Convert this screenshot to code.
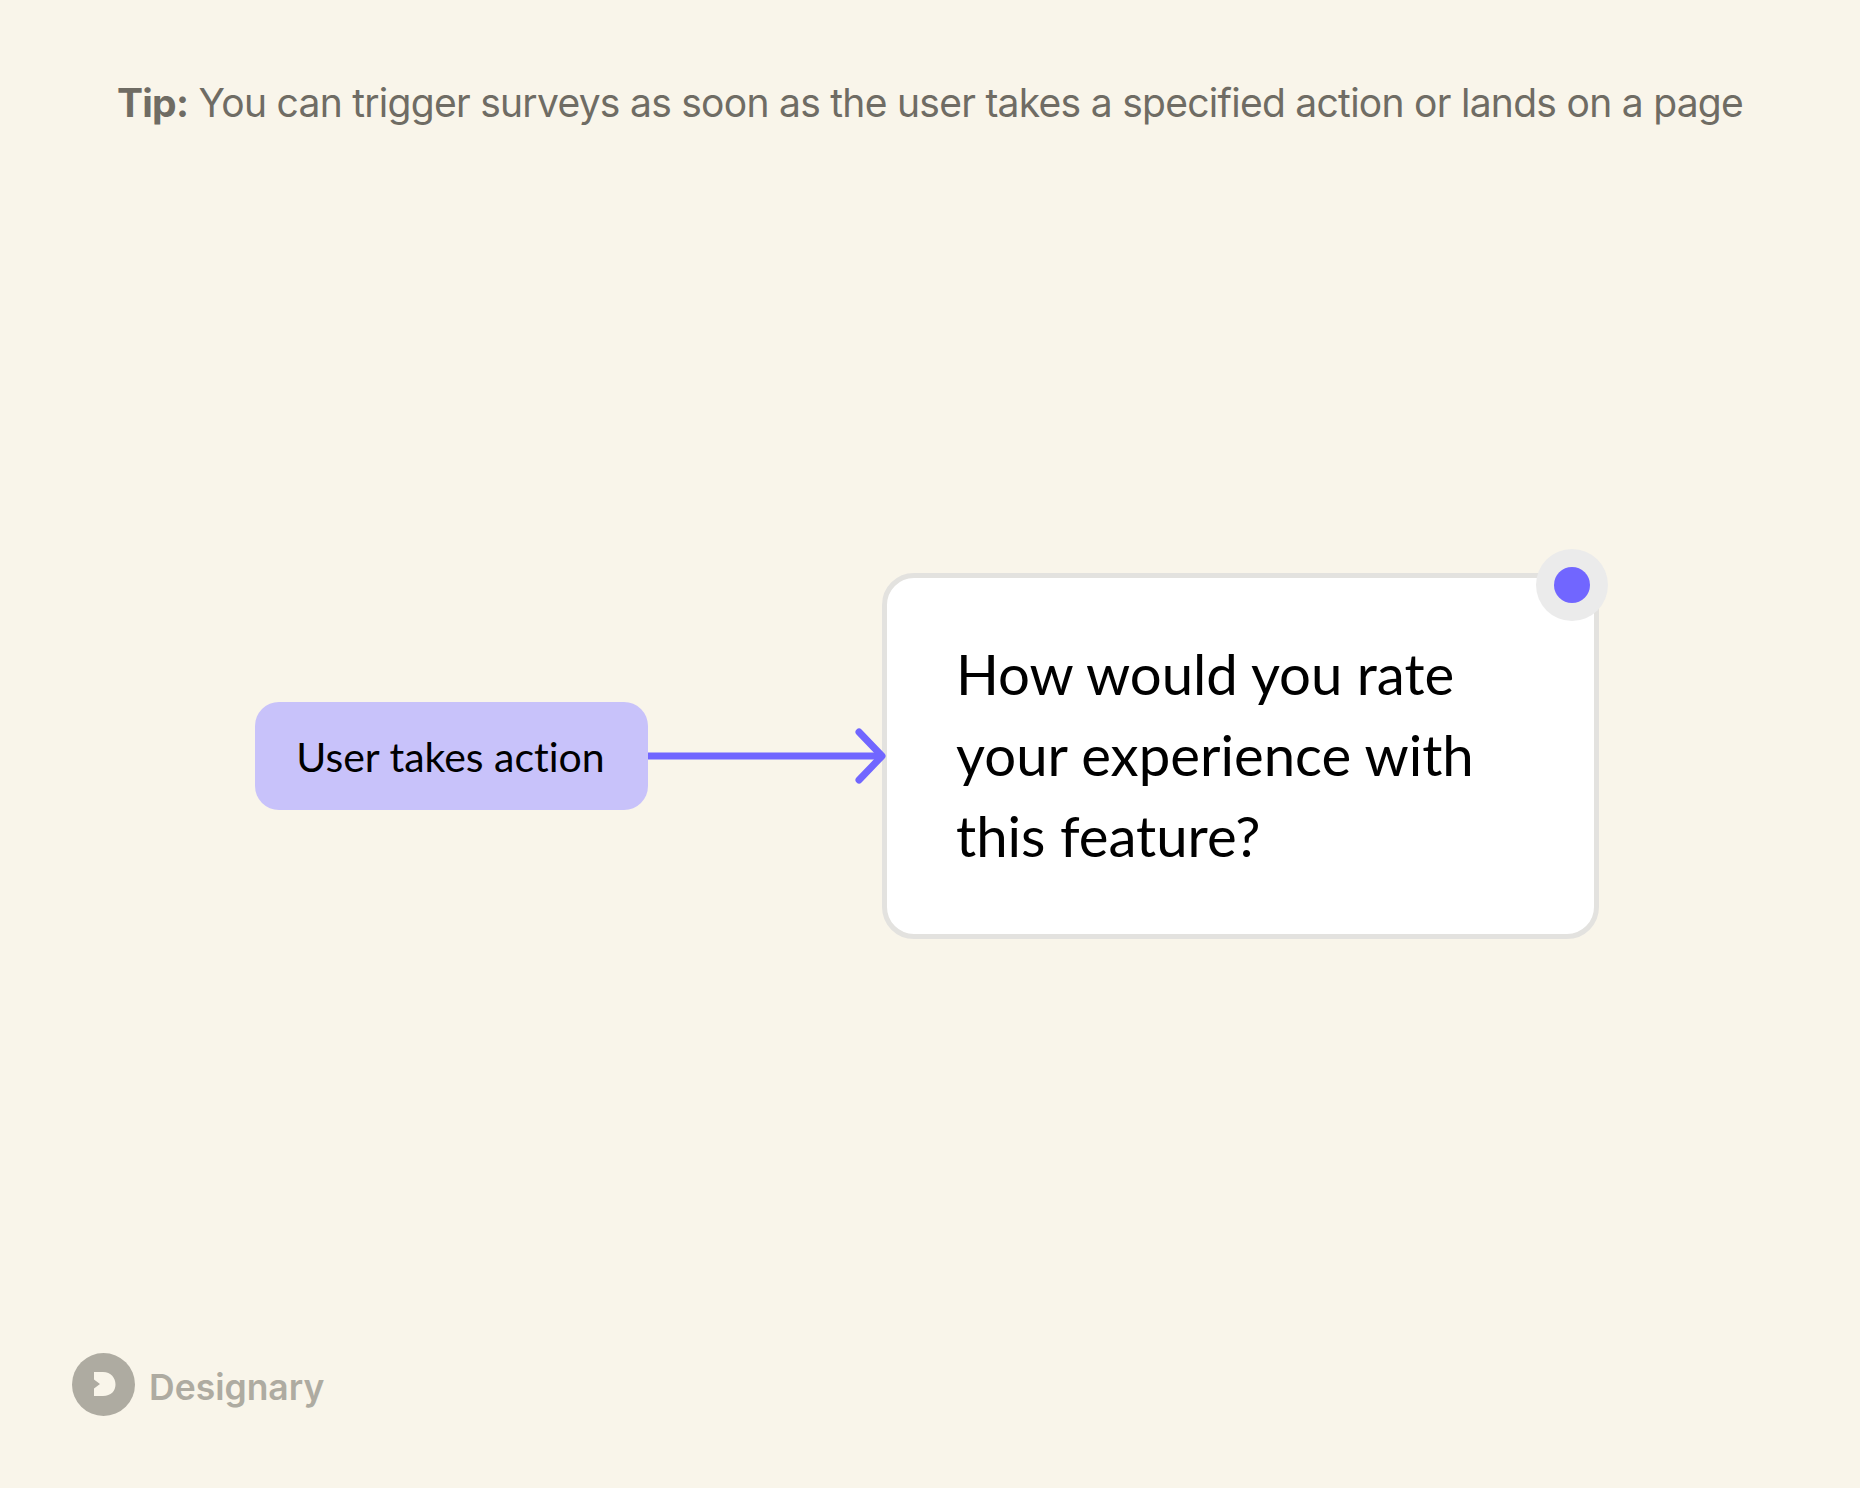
<div class="page">
  <p class="tip"><strong>Tip:</strong> You can trigger surveys as soon as the user takes a specified action or lands on a page</p>
  <div class="flow">
    <div class="trigger">User takes action</div>
    <svg class="arrow" width="239" height="70" viewBox="0 0 239 70" aria-hidden="true">
      <path d="M0 35H234" fill="none" stroke="#7166ff" stroke-width="7" />
      <path d="M211 11L234 35L211 59" fill="none" stroke="#7166ff" stroke-width="7" stroke-linecap="round" stroke-linejoin="round" />
    </svg>
    <div class="card">
      <p class="question">How would you rate your experience with this feature?</p>
      <span class="badge"><span class="dot"></span></span>
    </div>
  </div>
  <div class="brand">
    <svg width="63" height="63" viewBox="0 0 63 63" aria-hidden="true">
      <circle cx="31.5" cy="31.5" r="31.5" fill="#aeaba1" />
      <path d="M22 19H31C39 19 43.500 25 43.500 31.500C43.500 38 39 43 31 43H22V35.500L28 31L22 26.500Z" fill="#f9f5ea" />
    </svg>
    <span class="name">Designary</span>
  </div>
</div>

<style>
  :global(body) {
    margin: 0;
    background: #f9f5ea;
  }
  .page {
    box-sizing: border-box;
    width: 1860px;
    height: 1488px;
    display: flex;
    flex-direction: column;
    background: #f9f5ea;
  }
  .tip {
    margin: 75px 0 0;
    text-align: center;
    font: 400 39px/56px Inter, sans-serif;
    letter-spacing: -0.72px;
    color: #6f6c64;
    white-space: nowrap;
  }
  .tip strong {
    font-weight: 700;
  }
  .flow {
    display: flex;
    align-items: center;
    margin: 442px 0 0 255px;
    height: 366px;
  }
  .trigger {
    box-sizing: border-box;
    width: 393px;
    height: 108px;
    padding-right: 2px;
    border-radius: 24px;
    background: #c8c2fa;
    color: #000;
    display: flex;
    align-items: center;
    justify-content: center;
    font: 400 41px/1 Lato, sans-serif;
    font-variant-ligatures: none;
  }
  .arrow {
    flex: none;
    margin-right: -5px;
    position: relative;
    z-index: 1;
  }
  .card {
    position: relative;
    box-sizing: border-box;
    width: 717px;
    height: 366px;
    padding: 55px 60px 0 69px;
    background: #fff;
    border: 5px solid #e3e2df;
    border-radius: 32px;
  }
  .question {
    margin: 0;
    font: 400 56.300px/81px Lato, sans-serif;
    color: #000;
    font-variant-ligatures: none;
  }
  .badge {
    position: absolute;
    top: -29px;
    right: -14px;
    width: 72px;
    height: 72px;
    border-radius: 50%;
    background: #ebebeb;
    display: flex;
    align-items: center;
    justify-content: center;
  }
  .dot {
    width: 36px;
    height: 36px;
    border-radius: 50%;
    background: #7166ff;
  }
  .brand {
    display: flex;
    align-items: center;
    gap: 14px;
    margin: 414px 0 0 72px;
  }
  .name {
    font: 600 35.500px/1 Inter, sans-serif;
    color: #aeaba1;
    padding-top: 7px;
  }
</style>
